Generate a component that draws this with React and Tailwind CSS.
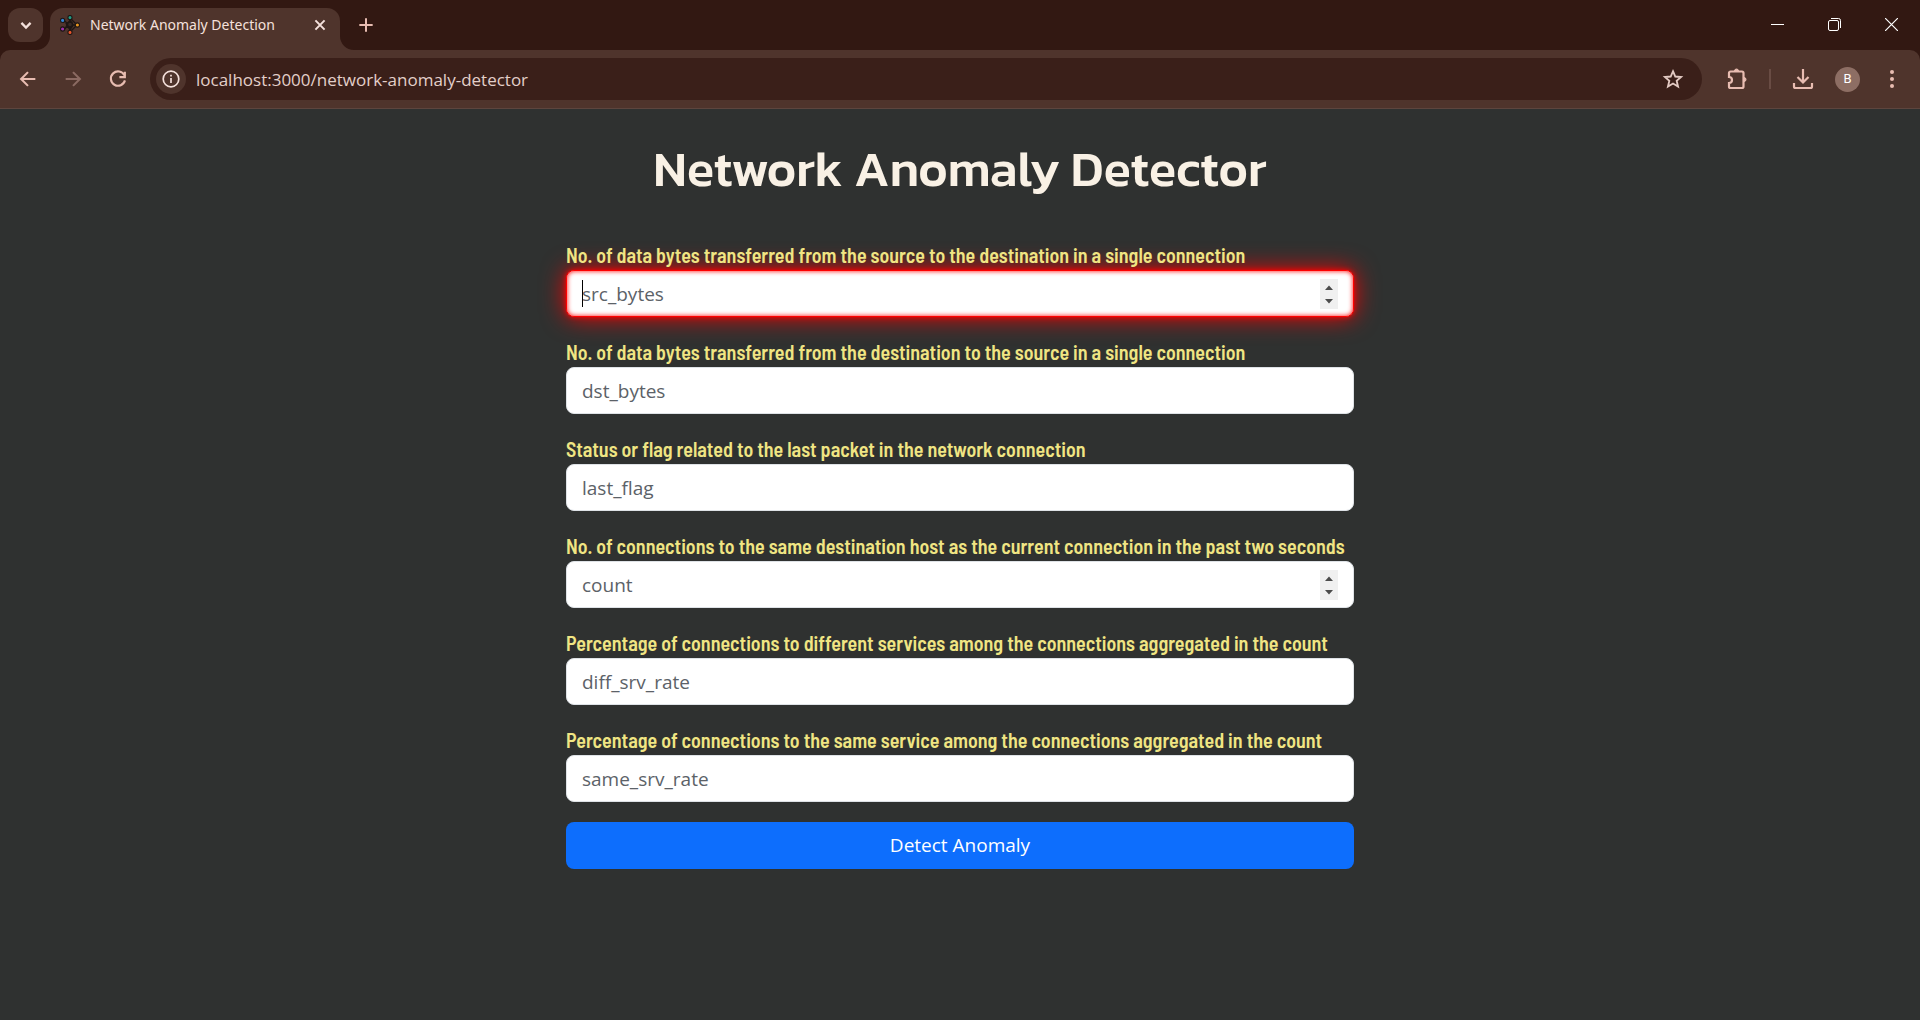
import React from "react";

const fields = [
  { name: "src_bytes", type: "number", active: true, label: "No. of data bytes transferred from the source to the destination in a single connection" },
  { name: "dst_bytes", type: "text", label: "No. of data bytes transferred from the destination to the source in a single connection" },
  { name: "last_flag", type: "text", label: "Status or flag related to the last packet in the network connection" },
  { name: "count", type: "number", label: "No. of connections to the same destination host as the current connection in the past two seconds" },
  { name: "diff_srv_rate", type: "text", label: "Percentage of connections to different services among the connections aggregated in the count" },
  { name: "same_srv_rate", type: "text", label: "Percentage of connections to the same service among the connections aggregated in the count" },
];

function Favicon() {
  return (
    <svg viewBox="0 0 20 20" className="size-5 shrink-0" fill="none">
      <g stroke="#1d1614" strokeWidth="1.4">
        <path d="M10 3v14M3 5l7 5 7 0M3 14l7-4M10 3l7 7-7 7M5 6l2 4-2 4M10 5L7 10l3 5 3-5z" />
        <circle cx="10" cy="9.5" r="2.5" fill="#3a2a26" />
      </g>
      <g stroke="#1d1614" strokeWidth="1.1">
        <circle cx="10" cy="2.6" r="2.1" fill="#1f9c86" />
        <circle cx="2.6" cy="5.4" r="2.1" fill="#2f86d6" />
        <circle cx="2.6" cy="14" r="2.1" fill="#a22fb0" />
        <circle cx="10" cy="17.4" r="2.1" fill="#e8532a" />
        <circle cx="17.4" cy="10" r="2.1" fill="#e9951f" />
      </g>
    </svg>
  );
}

function Icon({ children, className = "size-6", sw = 2 }) {
  return (
    <svg viewBox="0 0 24 24" className={className} fill="none" stroke="currentColor" strokeWidth={sw}>
      {children}
    </svg>
  );
}

function TabStrip() {
  return (
    <div className="flex h-[50px] items-start bg-[#321812] text-[#f5e1dc]">
      <button aria-label="Search tabs" className="mt-2 ml-2 grid h-[34px] w-[35px] shrink-0 place-items-center rounded-xl bg-[#4f342c]">
        <Icon className="size-5" sw={2.8}><path d="M6.5 9.500l5.500 5.500 5.500-5.500" /></Icon>
      </button>
      <div className="relative mt-2 ml-[7px] flex h-[42px] w-[290px] shrink-0 items-center rounded-t-[13px] bg-[#4f342c] px-2.5 pb-2">
        <svg viewBox="0 0 14 14" className="absolute bottom-0 -left-3.5 size-3.5 fill-[#4f342c]"><path d="M14 0v14H0A14 14 0 0 0 14 0z" /></svg>
        <svg viewBox="0 0 14 14" className="absolute -right-3.5 bottom-0 size-3.5 fill-[#4f342c]"><path d="M0 0v14h14A14 14 0 0 1 0 0z" /></svg>
        <Favicon />
        <span className="ml-2.5 flex-1 font-['Noto_Sans',sans-serif] text-[14px] leading-5 whitespace-nowrap">Network Anomaly Detection</span>
        <button aria-label="Close tab" className="grid size-5 place-items-center">
          <Icon className="size-5" sw={2.4}><path d="M6.500 6.500l11 11M17.500 6.500l-11 11" /></Icon>
        </button>
      </div>
      <button aria-label="New tab" className="mt-[15px] ml-4 grid size-5 place-items-center text-[#e8bcb1]">
        <Icon className="size-5" sw={2.4}><path d="M12 4v16M4 12h16" /></Icon>
      </button>
      <div className="ml-auto flex h-[49px] items-center text-white">
        <button aria-label="Minimize" className="grid h-full w-[57px] place-items-center">
          <svg viewBox="0 0 13 13" className="size-[13px]" stroke="currentColor"><path d="M0 6.500h13" /></svg>
        </button>
        <button aria-label="Restore" className="grid h-full w-[57px] place-items-center">
          <svg viewBox="0 0 13 13" className="size-[13px]" fill="none" stroke="currentColor">
            <rect x=".5" y="2.500" width="10" height="10" rx="1.500" />
            <path d="M3 .5h7.500a2 2 0 0 1 2 2V10" />
          </svg>
        </button>
        <button aria-label="Close window" className="grid h-full w-[57px] place-items-center">
          <svg viewBox="0 0 13 13" className="size-[13px]" stroke="currentColor" strokeWidth="1.200"><path d="M0 0l13 13M13 0L0 13" /></svg>
        </button>
      </div>
    </div>
  );
}

function Toolbar() {
  return (
    <div className="bg-[#321812]">
      <div className="flex h-[59px] items-center rounded-t-[10px] border-b border-[#5d453e] bg-[#4f342c] pr-4 text-[#e8bcb1]">
        <button aria-label="Back" className="ml-[17px] grid size-[22px] place-items-center">
          <Icon className="size-[22px]" sw={2.3}><path d="M20 12H5M12 4.500L4.500 12l7.500 7.500" /></Icon>
        </button>
        <button aria-label="Forward" className="ml-[23px] grid size-[22px] place-items-center text-[#8b6a62]">
          <Icon className="size-[22px]" sw={2.3}><path d="M4 12H19M12 4.500l7.500 7.500-7.500 7.500" /></Icon>
        </button>
        <button aria-label="Reload" className="ml-[23px] grid size-[22px] place-items-center">
          <Icon className="size-[22px]" sw={2.3}><path d="M19 8A7.800 7.800 0 1 0 19.600 13.500M19.500 4v6h-6" /></Icon>
        </button>
        <div className="ml-[21px] flex h-[42px] flex-1 items-center rounded-full bg-[#3a1f19] pr-[18px] pl-1.5">
          <button aria-label="View site information" className="grid size-[30px] shrink-0 place-items-center rounded-full bg-[#4f342c] text-[#f5e1dc]">
            <svg viewBox="0 0 18 18" className="size-[18px]" fill="none" stroke="currentColor" strokeWidth="1.700">
              <circle cx="9" cy="9" r="7.800" />
              <path d="M9 8v5M9 4.800v1.700" />
            </svg>
          </button>
          <input aria-label="Address" readOnly value="localhost:3000/network-anomaly-detector" className="ml-2.5 h-8 min-w-0 flex-1 bg-transparent text-[17px] text-[#e3cfc9] outline-none" />
          <button aria-label="Bookmark this tab" className="grid size-[22px] place-items-center text-[#e3cac3]">
            <Icon className="size-[22px]" sw={2}><path d="M12 3.500l2.500 5.800 6.300.5-4.800 4.200 1.500 6.200-5.500-3.300-5.500 3.300 1.500-6.200-4.800-4.200 6.300-.5z" /></Icon>
          </button>
        </div>
        <button aria-label="Extensions" className="ml-[23px] grid size-6 place-items-center">
          <Icon className="size-6" sw={2.2}><path d="M4 10V6a1.500 1.500 0 0 1 1.500-1.500H17a1.500 1.500 0 0 1 1.500 1.500v13.500A1.500 1.500 0 0 1 17 21H5.500A1.500 1.500 0 0 1 4 19.500V16a3 3 0 0 0 0-6z" /><path d="M9.500 4a2 2 0 0 1 4 0zM19 10.500a2 2 0 0 1 0 4z" fill="currentColor" strokeWidth="1" /></Icon>
        </button>
        <span className="ml-5 h-5 w-0.5 bg-[#694c44]" />
        <button aria-label="Downloads" className="ml-5 grid size-6 place-items-center">
          <Icon className="size-6" sw={2.2}><path d="M12 2v13M6.500 10l5.500 5.500 5.500-5.500M3 16v3.500a1.500 1.500 0 0 0 1.500 1.500h15a1.500 1.500 0 0 0 1.500-1.500V16" /></Icon>
        </button>
        <button aria-label="Profile" className="ml-5 grid size-[25px] place-items-center rounded-full bg-[#8d6e64] font-['Roboto',sans-serif] text-[13px] text-white">B</button>
        <button aria-label="Menu" className="ml-5 grid size-6 place-items-center">
          <svg viewBox="0 0 24 24" className="size-6 fill-current"><circle cx="12" cy="5" r="2" /><circle cx="12" cy="12" r="2" /><circle cx="12" cy="19" r="2" /></svg>
        </button>
      </div>
    </div>
  );
}

function Field({ name, type, label, active }) {
  return (
    <div className="mb-5">
      <label htmlFor={name} className="relative z-10 block font-['Barlow_Semi_Condensed','Roboto',sans-serif] text-[20px] leading-[30px] font-semibold text-[#f0e583]">{label}</label>
      <div className="relative">
        <input
          id={name}
          name={name}
          type={type}
          placeholder={name}
          className={
            "block h-[47px] w-full rounded-lg border bg-white px-[15px] text-[19px] placeholder:text-[#5c6268] [&::-webkit-inner-spin-button]:h-[30px] [&::-webkit-inner-spin-button]:w-[18px] [&::-webkit-inner-spin-button]:appearance-none [&::-webkit-inner-spin-button]:bg-[#f0f0f0] [&::-webkit-inner-spin-button]:opacity-100 " +
            (active ? "border-[#ff0000] shadow-[0_0_5px_#ff0000,0_0_25px_#ff0000,inset_0_0_5px_#ff0000]" : "border-[#dee2e6]")
          }
        />
        {type === "number" && (
          <svg viewBox="0 0 18 30" className="pointer-events-none absolute inset-y-0 right-4 my-auto h-[30px] w-[18px] fill-[#4c4c4c]">
            <path d="M5 11l4-4.500 4 4.500zM5 20l4 4.500 4-4.500z" />
          </svg>
        )}
        {active && <span className="absolute top-2.5 left-4 h-[27px] w-px bg-black" />}
      </div>
    </div>
  );
}

export default function App() {
  return (
    <div className="flex min-h-screen flex-col bg-[#2f3130] font-['Open_Sans','Noto_Sans',sans-serif]">
      <TabStrip />
      <Toolbar />
      <main className="flex flex-1 flex-col items-center px-4 pt-[30px]">
        <h1 className="mb-[41px] text-center font-['Kanit','Inter',sans-serif] text-[50px] leading-[60px] font-medium text-[#f9f1e5]">Network Anomaly Detector</h1>
        <form className="w-full max-w-[788px]" onSubmit={(e) => e.preventDefault()}>
          {fields.map((f) => <Field key={f.name} {...f} />)}
          <button type="submit" className="h-[47px] w-full rounded-lg bg-[#0d6efd] text-[19px] text-white">Detect Anomaly</button>
        </form>
      </main>
    </div>
  );
}
